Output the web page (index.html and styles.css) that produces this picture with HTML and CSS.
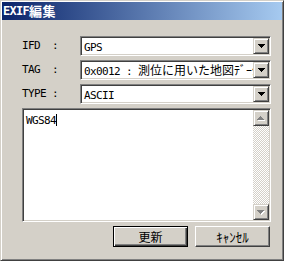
FILE: index.html
```html
<!DOCTYPE html>
<html lang="ja">
<head>
    <meta charset="UTF-8">
    <title>EXIF編集</title>
    <link rel="stylesheet" href="styles.css">
</head>
<body>
    <div class="window">
        <div class="titlebar"><span class="hw">EXIF</span><span class="zw">編集</span></div>
        <div class="body">
            <div class="row">
                <span class="label hw">IFD</span><span class="colon hw">:</span>
                <div class="combo">
                    <div class="combo-text"><span class="hw">GPS</span></div>
                    <div class="raised-btn"><svg width="7" height="4"><path d="M0 0H7V1H6V2H5V3H4V4H3V3H2V2H1V1H0Z" fill="#000"/></svg></div>
                </div>
            </div>
            <div class="row">
                <span class="label hw">TAG</span><span class="colon hw">:</span>
                <div class="combo">
                    <div class="combo-text"><span class="hw">0x0012 : </span>測位に用いた地図ﾃﾞｰﾀ</div>
                    <div class="raised-btn"><svg width="7" height="4"><path d="M0 0H7V1H6V2H5V3H4V4H3V3H2V2H1V1H0Z" fill="#000"/></svg></div>
                </div>
            </div>
            <div class="row">
                <span class="label hw">TYPE</span><span class="colon hw">:</span>
                <div class="combo">
                    <div class="combo-text"><span class="hw">ASCII</span></div>
                    <div class="raised-btn"><svg width="7" height="4"><path d="M0 0H7V1H6V2H5V3H4V4H3V3H2V2H1V1H0Z" fill="#000"/></svg></div>
                </div>
            </div>
            <div class="memo">
                <div class="memo-text"><span class="hw">WGS84</span><span class="caret"></span></div>
                <div class="scrollbar">
                    <div class="raised-btn scroll-btn">
                        <svg width="8" height="5">
                            <path d="M4 1H5V2H6V3H7V4H8V5H1V4H2V3H3V2H4Z" fill="#fff"/>
                            <path d="M3 0H4V1H5V2H6V3H7V4H0V3H1V2H2V1H3Z" fill="#808080"/>
                        </svg>
                    </div>
                    <div class="scroll-track"></div>
                    <div class="raised-btn scroll-btn">
                        <svg width="8" height="5">
                            <path d="M1 1H8V2H7V3H6V4H5V5H4V4H3V3H2V2H1Z" fill="#fff"/>
                            <path d="M0 0H7V1H6V2H5V3H4V4H3V3H2V2H1V1H0Z" fill="#808080"/>
                        </svg>
                    </div>
                </div>
            </div>
            <div class="buttons">
                <button class="btn default">更新</button>
                <button class="btn cancel">ｷｬﾝｾﾙ</button>
            </div>
        </div>
    </div>
</body>
</html>
```

FILE: styles.css
```css
* {
    box-sizing: border-box;
}
body {
    margin: 0;
    background-color: #d4d0c8;
    font-family: "Noto Sans CJK JP", sans-serif;
    font-size: 12px;
    line-height: 16px;
    color: #000;
}
.hw {
    font-family: "DejaVu Sans Mono", "Noto Sans CJK JP", monospace;
    font-size: 11px;
    letter-spacing: -0.62px;
}
.window {
    width: 284px;
    height: 261px;
    padding: 1px;
    border: 1px solid;
    border-color: #d4d0c8 #404040 #404040 #d4d0c8;
    box-shadow: inset 1px 1px #fff, inset -1px -1px #808080;
    background: #d4d0c8;
    display: flex;
    flex-direction: column;
}
.titlebar {
    height: 18px;
    padding-left: 1px;
    background: linear-gradient(to right, #0a246a, #a6caf0);
    color: #fff;
    font-weight: bold;
    line-height: 18px;
    display: flex;
    align-items: center;
}
.titlebar .hw {
    font-size: 12px;
    letter-spacing: -0.7px;
}
.titlebar .zw {
    font-size: 13px;
    letter-spacing: 0.5px;
}
.body {
    flex: 1;
    padding: 16px 11px 0 20px;
    display: flex;
    flex-direction: column;
    gap: 4px;
}
.row {
    height: 20px;
    display: flex;
    align-items: center;
}
.label {
    width: 30px;
}
.colon {
    width: 28px;
}
.combo,
.memo {
    background: #fff;
    padding: 1px;
    border: 1px solid;
    border-color: #808080 #fff #fff #808080;
    box-shadow: inset 1px 1px #404040, inset -1px -1px #d4d0c8;
    display: flex;
}
.combo {
    width: 191px;
    height: 20px;
}
.combo-text {
    flex: 1;
    padding-left: 2px;
    overflow: hidden;
    white-space: nowrap;
    line-height: 16px;
}
.raised-btn {
    width: 16px;
    height: 16px;
    flex-shrink: 0;
    background: #d4d0c8;
    border: 1px solid;
    border-color: #d4d0c8 #404040 #404040 #d4d0c8;
    box-shadow: inset 1px 1px #fff, inset -1px -1px #808080;
    display: flex;
    align-items: center;
    justify-content: center;
}
.raised-btn svg {
    display: block;
}
.memo {
    width: 249px;
    height: 114px;
}
.memo-text {
    flex: 1;
    padding: 2px 2px;
    line-height: 14px;
}
.caret {
    display: inline-block;
    width: 1px;
    height: 12px;
    background: #000;
    vertical-align: -2px;
}
.scrollbar {
    width: 16px;
    display: flex;
    flex-direction: column;
    background: repeating-conic-gradient(#fff 0 25%, #d4d0c8 0 50%) 0 0 / 2px 2px;
}
.scroll-track {
    flex: 1;
}
.buttons {
    display: flex;
    justify-content: flex-end;
    gap: 7px;
    padding-right: 1px;
}
.btn {
    width: 75px;
    height: 21px;
    padding: 0;
    font: inherit;
    color: #000;
    background: #d4d0c8;
    border: 1px solid;
    border-color: #fff #404040 #404040 #fff;
    box-shadow: inset -1px -1px #808080;
}
.btn.cancel {
    font-size: 13px;
}
.btn.default {
    border-color: #000;
    box-shadow: inset 1px 1px #fff, inset -1px -1px #404040, inset -2px -2px #808080;
}
```
